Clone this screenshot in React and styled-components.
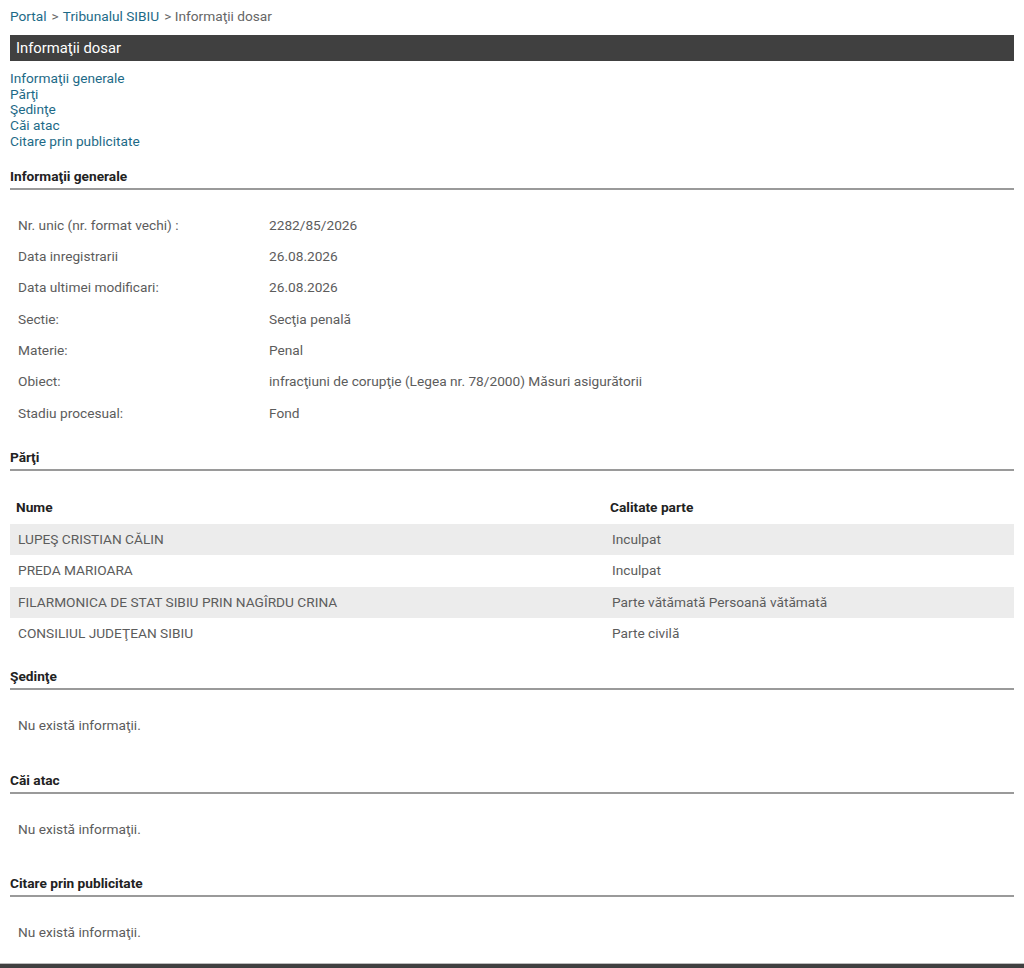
import React from "react";
import styled, { createGlobalStyle } from "styled-components";

const GlobalStyle = createGlobalStyle`
  html, body {
    margin: 0;
    padding: 0;
    background: #fff;
    font-family: Roboto, "Liberation Sans", Arial, sans-serif;
    font-size: 13.7px;
    color: #5c5c5c;
  }
`;

const Page = styled.div`
  padding: 6px 10px 0;
`;

const Crumbs = styled.div`
  display: flex;
  gap: 4px;
  line-height: 20px;
  color: #666;
`;

const Crumb = styled.a`
  color: #1d6a87;
  text-decoration: none;
  margin-right: 1px;
`;

const TitleBar = styled.h1`
  margin: 9px 0 0;
  height: 26px;
  line-height: 26px;
  padding: 0 6px;
  background: #404040;
  color: #fff;
  font-size: 14.8px;
  font-weight: 400;
`;

const Nav = styled.nav`
  display: flex;
  flex-direction: column;
  margin-top: 10px;
`;

const NavLink = styled.a`
  color: #1d6a87;
  text-decoration: none;
  line-height: 15.7px;
`;

const SectionHead = styled.h2`
  margin: ${(p) => p.$top || 16}px 0 0;
  padding-bottom: 2px;
  border-bottom: 2px solid #9a9a9a;
  font-size: 13.7px;
  line-height: 20px;
  font-weight: 700;
  color: #222;
`;

const InfoList = styled.div`
  display: grid;
  grid-template-columns: 251px 1fr;
  margin-top: 20px;
  padding-left: 8px;
`;

const InfoCell = styled.div`
  height: 31.4px;
  line-height: 31.4px;
`;

const Table = styled.div`
  margin-top: 20px;
  display: grid;
  grid-template-columns: 594px 1fr;
`;

const Th = styled.div`
  height: 32.5px;
  line-height: 32px;
  padding-left: 6px;
  font-weight: 700;
  color: #222;
`;

const Td = styled.div`
  height: 31.5px;
  line-height: 31.5px;
  padding-left: 8px;
  background: ${(p) => (p.$striped ? "#ececec" : "transparent")};
`;

const Empty = styled.div`
  margin: 20px 0 12px;
  padding-left: 8px;
  height: 31.4px;
  line-height: 31.4px;
`;

const Footer = styled.footer`
  margin-top: 15px;
  height: 6px;
  border-top: 1px solid #bdbdbd;
  background: #404040;
`;

const info = [
  ["Nr. unic (nr. format vechi) :", "2282/85/2026"],
  ["Data inregistrarii", "26.08.2026"],
  ["Data ultimei modificari:", "26.08.2026"],
  ["Sectie:", "Secţia penală"],
  ["Materie:", "Penal"],
  ["Obiect:", "infracţiuni de corupţie (Legea nr. 78/2000) Măsuri asigurătorii"],
  ["Stadiu procesual:", "Fond"],
];

const parti = [
  ["LUPEŞ CRISTIAN CĂLIN", "Inculpat"],
  ["PREDA MARIOARA", "Inculpat"],
  ["FILARMONICA DE STAT SIBIU PRIN NAGÎRDU CRINA", "Parte vătămată Persoană vătămată"],
  ["CONSILIUL JUDEŢEAN SIBIU", "Parte civilă"],
];

export default function App() {
  return (
    <>
      <GlobalStyle />
      <Page>
        <Crumbs>
          <Crumb href="#">Portal</Crumb>
          <span>&gt;</span>
          <Crumb href="#">Tribunalul SIBIU</Crumb>
          <span>&gt; Informaţii dosar</span>
        </Crumbs>
        <TitleBar>Informaţii dosar</TitleBar>
        <Nav>
          <NavLink href="#">Informaţii generale</NavLink>
          <NavLink href="#">Părţi</NavLink>
          <NavLink href="#">Şedinţe</NavLink>
          <NavLink href="#">Căi atac</NavLink>
          <NavLink href="#">Citare prin publicitate</NavLink>
        </Nav>

        <SectionHead>Informaţii generale</SectionHead>
        <InfoList>
          {info.map(([k, v]) => (
            <React.Fragment key={k}>
              <InfoCell>{k}</InfoCell>
              <InfoCell>{v}</InfoCell>
            </React.Fragment>
          ))}
        </InfoList>

        <SectionHead $top={18}>Părţi</SectionHead>
        <Table>
          <Th>Nume</Th>
          <Th>Calitate parte</Th>
          {parti.map(([n, c], i) => (
            <React.Fragment key={n}>
              <Td $striped={i % 2 === 0}>{n}</Td>
              <Td $striped={i % 2 === 0}>{c}</Td>
            </React.Fragment>
          ))}
        </Table>

        <SectionHead $top={16}>Şedinţe</SectionHead>
        <Empty>Nu există informaţii.</Empty>

        <SectionHead $top={29}>Căi atac</SectionHead>
        <Empty>Nu există informaţii.</Empty>

        <SectionHead $top={27}>Citare prin publicitate</SectionHead>
        <Empty>Nu există informaţii.</Empty>
      </Page>
      <Footer />
    </>
  );
}
